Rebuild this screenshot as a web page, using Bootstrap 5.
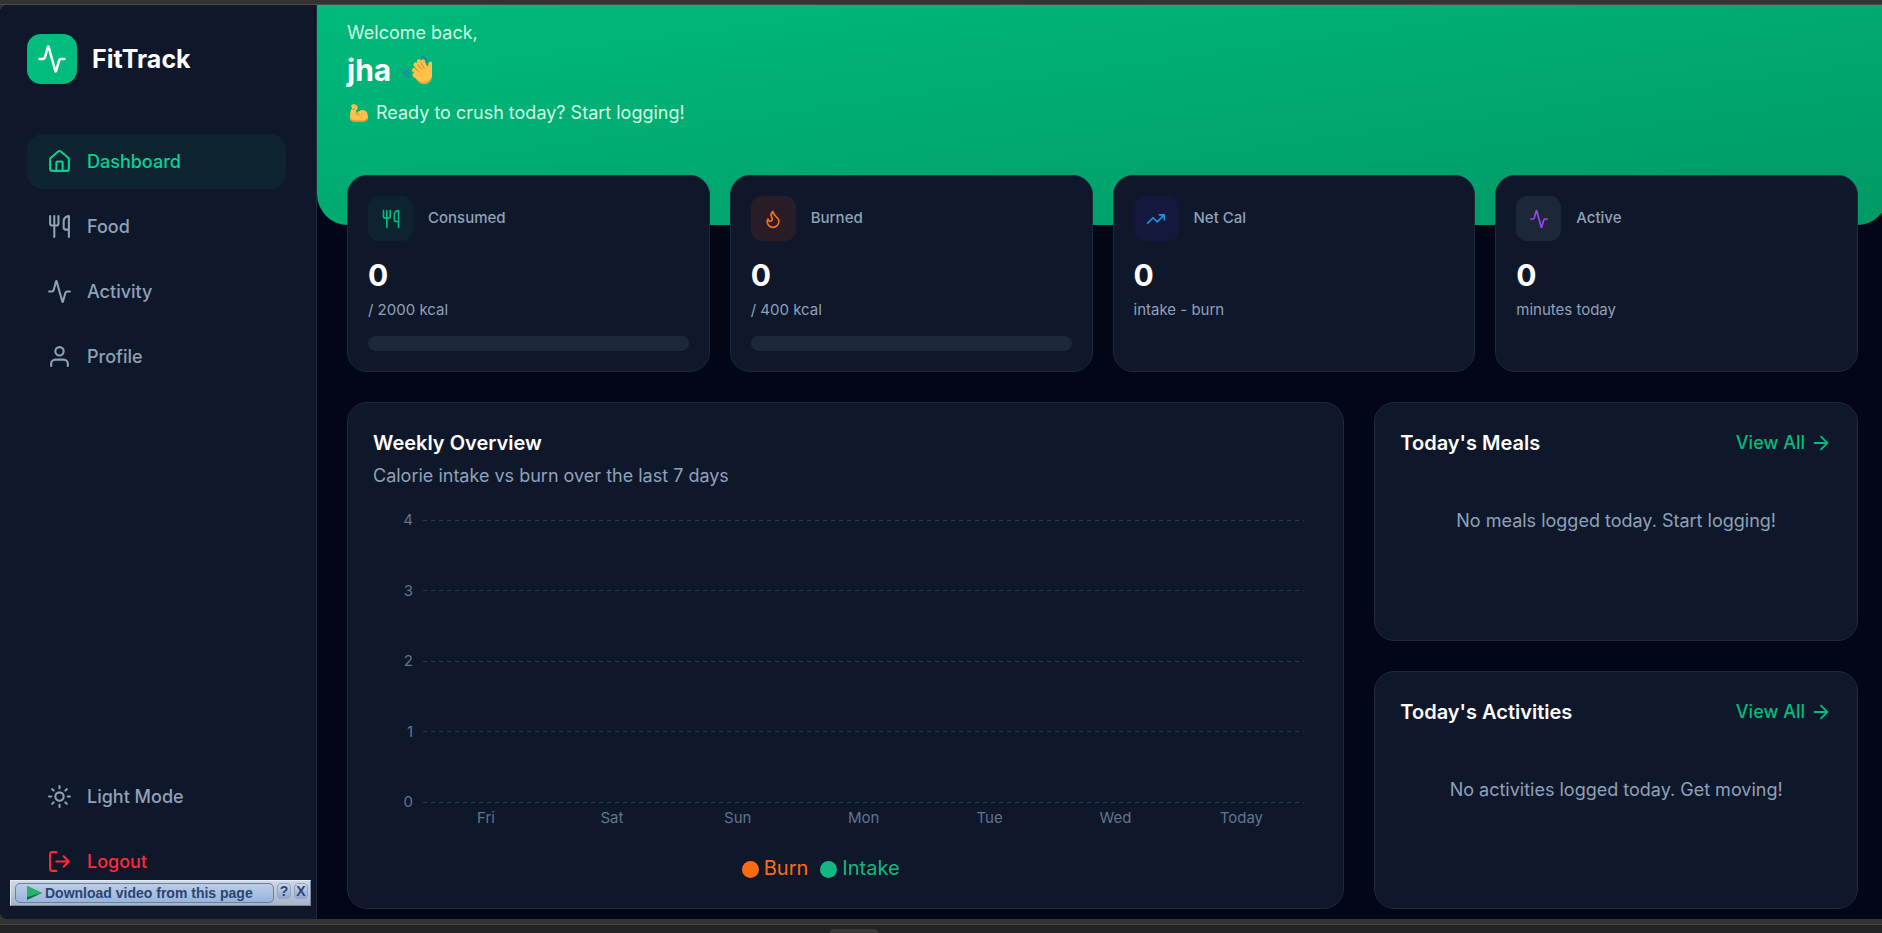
<!DOCTYPE html>
<html lang="en">
<head>
<meta charset="utf-8">
<meta name="viewport" content="width=device-width, initial-scale=1">
<title>FitTrack</title>
<link href="https://cdn.jsdelivr.net/npm/bootstrap@5.3.0/dist/css/bootstrap.min.css" rel="stylesheet">
<style>
  :root { --panel:#0f172a; --line:#1e293b; --page:#020617; --muted:#90a1b9; --dim:#62748e; --green:#00bc7d; }
  body { font-family: Inter, sans-serif; font-size:18px; line-height:28px; background:#333; color:#fff; min-height:100vh; overflow:hidden; }
  .frame-top { height:5px; background:#333; border-bottom:1px solid #4a4a4a; }
  .frame-foot { height:14px; background:#212324; border-top:5px solid #333; box-shadow:inset 0 1px #444; }
  .handle { width:48px; height:4px; background:#3a3a3a; border-radius:4px 4px 0 0; margin:5px auto 0; position:relative; right:87px; }
  .shell { background:var(--page); border-radius:8px 0 0 8px; overflow:hidden; }
  .sidebar { width:317px; background:var(--panel); border-right:1px solid var(--line); padding:29px 30px 30px 27px; }
  .gap-md { gap:15px; }
  .gap-sm { gap:10px; }
  .logo-box { width:50px; height:50px; border-radius:14px; background:var(--green); }
  .brand { font-size:25px; font-weight:700; }
  svg.ico { fill:none; stroke:currentColor; stroke-width:2; stroke-linecap:round; stroke-linejoin:round; flex:none; display:block; }
  .side-link { display:flex; align-items:center; gap:15px; width:100%; height:55px; padding:0 20px; border:0; border-radius:16px; background:none; color:var(--muted); font-weight:500; text-decoration:none; }
  .side-link.active { background:#0d232f; color:#00d492; }
  .side-link.danger { color:#fb2c36; }
  .side-nav { gap:10px; margin-top:50px; }
  .main { min-width:0; margin-right:-6px; }
  .hero { height:220px; padding:14px 30px; background:linear-gradient(to bottom right,#00ba7b,#009966); border-radius:0 0 31px 31px; color:#d0fae5; }
  .hero h1 { font-size:30px; line-height:36px; font-weight:700; color:#fff; margin:5px 0 11px; gap:12px; }
  .cheer { gap:7px; }
  .content { padding:0 30px 10px; margin-top:-50px; gap:30px; }
  .stats { display:grid; grid-template-columns:repeat(4,1fr); gap:20px; }
  .panel { background:var(--panel); border:1px solid var(--line); border-radius:20px; }
  .stat { height:197px; padding:20px; }
  .stat-ico { width:45px; height:45px; border-radius:11px; }
  .tone-food { background:#0d232f; color:#00bc7d; }
  .tone-burn { background:#281c27; color:#ff6b13; }
  .tone-net { background:#13193c; color:#2090dc; }
  .tone-active { background:#1d273a; color:#9b45f0; }
  .stat-name { font-size:15px; line-height:24px; padding-bottom:2px; font-weight:500; color:var(--muted); }
  .stat-num { font-size:30px; line-height:36px; font-weight:700; margin-top:16px; }
  .stat-sub { font-size:15px; line-height:24px; color:var(--muted); margin-top:5px; }
  .meter { height:15px; border-radius:8px; background:#1d293a; margin-top:14px; }
  .boards { display:grid; grid-template-columns:repeat(3,1fr); gap:30px; }
  .week { grid-column:span 2; padding:26px 25px; }
  .side-panels { gap:30px; }
  .side-panel { flex:1 1 0; padding:26px 25px; }
  h2 { font-size:20px; line-height:28px; font-weight:600; margin:0; }
  .soft { color:var(--muted); }
  .subtitle { margin-top:5px; }
  .empty-note { margin:50px 0 0; }
  .view-all { color:var(--green); font-weight:500; text-decoration:none; gap:5px; }
  .plot { margin:18px 14px 0 26px; }
  .tick { height:24px; line-height:24px; font-size:15px; color:var(--dim); gap:10px; }
  .tick span { width:14px; text-align:right; }
  .tick i { flex:1; height:1px; background:repeating-linear-gradient(90deg,#2b3a4e 0 4px,transparent 4px 8px); }
  .days { margin:-8px 14px 0 50px; }
  .days span { flex:1 1 0; text-align:center; font-size:15px; line-height:24px; color:var(--dim); }
  .legend-row { gap:12px; margin-top:24px; padding-right:50px; font-size:20px; }
  .legend-row span { gap:5px; }
  .legend-row i { width:17px; height:17px; border-radius:50%; background:currentColor; margin-top:2px; }
  .lg-burn { color:#ff6b13; }
  .lg-intake { color:#10b981; }
  .grabber { position:absolute; left:10px; bottom:27px; width:301px; height:26px; background:linear-gradient(#cdd9e6,#a6b4c6); border:1px solid #e3ebf2; border-bottom-color:#7787a2; border-right-color:#7787a2; padding:0 2px 0 4px; gap:3px; }
  .grabber button { border:1px solid #8fa3c2; padding:0; color:#2b4470; font-family:"Liberation Sans",sans-serif; font-weight:700; font-size:14px; line-height:16px; background:linear-gradient(#c9d6e8,#8fa9d0); white-space:nowrap; }
  .grabber .get { width:260px; height:20px; border:1px solid #6681a8; border-radius:5px; background:linear-gradient(#bccde3,#99b4de); padding-left:10px; gap:3px; }
  .grabber .sq { width:14px; height:16px; line-height:14px; border-radius:4px; margin-bottom:4px; }
</style>
</head>
<body class="d-flex flex-column">
<svg width="0" height="0" class="position-absolute" aria-hidden="true">
  <symbol id="pulse" viewBox="0 0 24 24"><path d="M22 12h-2.48a2 2 0 0 0-1.93 1.46l-2.35 8.36a.25.25 0 0 1-.48 0L9.24 2.18a.25.25 0 0 0-.48 0l-2.35 8.36A2 2 0 0 1 4.49 12H2"/></symbol>
  <symbol id="fork" viewBox="0 0 24 24"><path d="M3 2v7c0 1.100.9 2 2 2h4a2 2 0 0 0 2-2V2M7 2v20M21 15V2a5 5 0 0 0-5 5v6c0 1.100.9 2 2 2h3Zm0 0v7"/></symbol>
  <symbol id="arrow" viewBox="0 0 24 24"><path d="M5 12h14M12 5l7 7-7 7"/></symbol>
</svg>
<div class="frame-top"></div>
<div class="shell d-flex flex-grow-1 position-relative">
  <aside class="sidebar d-flex flex-column flex-shrink-0">
    <div class="d-flex align-items-center gap-md">
      <div class="logo-box d-flex align-items-center justify-content-center"><svg class="ico" width="30" height="30"><use href="#pulse"/></svg></div>
      <span class="brand">FitTrack</span>
    </div>
    <nav class="side-nav d-flex flex-column">
      <a class="side-link active" href="#"><svg class="ico" width="25" height="25" viewBox="0 0 24 24"><path d="M15 21v-8a1 1 0 0 0-1-1h-4a1 1 0 0 0-1 1v8"/><path d="M3 10a2 2 0 0 1 .71-1.53l7-6a2 2 0 0 1 2.580 0l7 6A2 2 0 0 1 21 10v9a2 2 0 0 1-2 2H5a2 2 0 0 1-2-2z"/></svg>Dashboard</a>
      <a class="side-link" href="#"><svg class="ico" width="25" height="25"><use href="#fork"/></svg>Food</a>
      <a class="side-link" href="#"><svg class="ico" width="25" height="25"><use href="#pulse"/></svg>Activity</a>
      <a class="side-link" href="#"><svg class="ico" width="25" height="25" viewBox="0 0 24 24"><path d="M20 21v-2a4 4 0 0 0-4-4H8a4 4 0 0 0-4 4v2"/><circle cx="12" cy="7" r="4"/></svg>Profile</a>
    </nav>
    <div class="mt-auto d-flex flex-column gap-sm">
      <button class="side-link" type="button"><svg class="ico" width="25" height="25" viewBox="0 0 24 24"><circle cx="12" cy="12" r="4"/><path d="M12 2v2M12 20v2M4.930 4.930l1.410 1.410M17.660 17.660l1.410 1.410M2 12h2M20 12h2M6.340 17.660l-1.410 1.410M19.070 4.930l-1.410 1.410"/></svg>Light Mode</button>
      <button class="side-link danger" type="button"><svg class="ico" width="25" height="25" viewBox="0 0 24 24"><path d="M9 21H5a2 2 0 0 1-2-2V5a2 2 0 0 1 2-2h4M16 17l5-5-5-5M21 12H9"/></svg>Logout</button>
    </div>
  </aside>

  <main class="main flex-grow-1 d-flex flex-column">
    <header class="hero">
      <div>Welcome back,</div>
      <h1 class="d-flex align-items-center">jha
        <svg width="30" height="30" viewBox="0 0 30 30" role="img" aria-label="waving hand">
          <g fill="none" stroke="#247fb0" stroke-width="1.300" stroke-linecap="round"><path d="M1 15q0 5 5 7M3.500 15q.5 3 3 4M18 1.500q5 0 6.500 5.500M19 4q2.500.5 3.300 3"/></g>
          <g stroke="#ffc148" stroke-width="4.200" stroke-linecap="round"><path d="M18 21 11 15M19 17 12.500 9.500M20 15 16 6.500M22 14 20 6.500M17 24 11.500 20"/></g>
          <path d="M14 14l8-6 3 4 .3-3q.7-3 2.700-2.500l1 1v14q-1 6.500-7 7.500-5 .5-8-4l-3-5z" fill="#ffc148"/>
          <path d="M12.500 13.500l4 3.500M14.500 9.500l4.500 5M18 7.500l3.500 6.500" stroke="#d5892f" stroke-width="1" fill="none"/><path d="M15 26q3.500 3 7.500 2 4-1 5.500-4" stroke="#e49a38" stroke-width="1.200" fill="none"/>
        </svg>
      </h1>
      <div class="cheer d-flex align-items-center">
        <svg width="22" height="20" viewBox="0 0 22 20" role="img" aria-label="flexed arm">
          <path d="M4 2.500Q6 .5 8.500 1.500q3 1 2 4.500L9 7.500l.5 3q3-4 6.500-3.500 5 1 5 7 0 4-5 4.500H7q-4-.5-4-5Q3 8 5 5.500z" fill="#ffc148"/>
          <path d="M3.300 15.500q1 2.500 4 2.600h8.500q4-.4 4.700-3" fill="none" stroke="#ea9638" stroke-width="1.600"/><path d="M5.500 6.500l2.500-1M9.500 10.500q1.500 0 2.500 2M14.500 11h.6M13.500 14h.6" stroke="#cf842d" fill="none"/>
        </svg>Ready to crush today? Start logging!</div>
    </header>

    <div class="content d-flex flex-column flex-grow-1">
      <section class="stats">
        <article class="panel stat">
          <div class="d-flex align-items-center gap-md"><div class="stat-ico tone-food d-flex align-items-center justify-content-center"><svg class="ico" width="20" height="20"><use href="#fork"/></svg></div><span class="stat-name">Consumed</span></div>
          <div class="stat-num">0</div><div class="stat-sub">/ 2000 kcal</div><div class="meter"></div>
        </article>
        <article class="panel stat">
          <div class="d-flex align-items-center gap-md"><div class="stat-ico tone-burn d-flex align-items-center justify-content-center"><svg class="ico" width="20" height="20" viewBox="0 0 24 24"><path d="M8.500 14.500A2.500 2.500 0 0 0 11 12c0-1.380-.5-2-1-3-1.072-2.143-.224-4.054 2-6 .5 2.500 2 4.900 4 6.500 2 1.600 3 3.500 3 5.500a7 7 0 1 1-14 0c0-1.153.433-2.294 1-3a2.500 2.500 0 0 0 2.500 2.500z"/></svg></div><span class="stat-name">Burned</span></div>
          <div class="stat-num">0</div><div class="stat-sub">/ 400 kcal</div><div class="meter"></div>
        </article>
        <article class="panel stat">
          <div class="d-flex align-items-center gap-md"><div class="stat-ico tone-net d-flex align-items-center justify-content-center"><svg class="ico" width="20" height="20" viewBox="0 0 24 24"><path d="M22 7l-8.500 8.500-5-5L2 17M16 7h6v6"/></svg></div><span class="stat-name">Net Cal</span></div>
          <div class="stat-num">0</div><div class="stat-sub">intake - burn</div>
        </article>
        <article class="panel stat">
          <div class="d-flex align-items-center gap-md"><div class="stat-ico tone-active d-flex align-items-center justify-content-center"><svg class="ico" width="20" height="20"><use href="#pulse"/></svg></div><span class="stat-name">Active</span></div>
          <div class="stat-num">0</div><div class="stat-sub">minutes today</div>
        </article>
      </section>

      <section class="boards flex-grow-1">
        <article class="panel week d-flex flex-column">
          <h2>Weekly Overview</h2>
          <div class="soft subtitle">Calorie intake vs burn over the last 7 days</div>
          <div class="plot flex-grow-1 d-flex flex-column justify-content-between">
            <div class="tick d-flex align-items-center"><span>4</span><i></i></div>
            <div class="tick d-flex align-items-center"><span>3</span><i></i></div>
            <div class="tick d-flex align-items-center"><span>2</span><i></i></div>
            <div class="tick d-flex align-items-center"><span>1</span><i></i></div>
            <div class="tick d-flex align-items-center"><span>0</span><i></i></div>
          </div>
          <div class="days d-flex"><span>Fri</span><span>Sat</span><span>Sun</span><span>Mon</span><span>Tue</span><span>Wed</span><span>Today</span></div>
          <div class="legend-row d-flex justify-content-center">
            <span class="lg-burn d-flex align-items-center"><i></i>Burn</span>
            <span class="lg-intake d-flex align-items-center"><i></i>Intake</span>
          </div>
        </article>
        <div class="side-panels d-flex flex-column">
          <article class="panel side-panel">
            <div class="d-flex justify-content-between align-items-center"><h2>Today's Meals</h2><a class="view-all d-flex align-items-center" href="#">View All <svg class="ico" width="22" height="22"><use href="#arrow"/></svg></a></div>
            <p class="soft text-center empty-note">No meals logged today. Start logging!</p>
          </article>
          <article class="panel side-panel">
            <div class="d-flex justify-content-between align-items-center"><h2>Today's Activities</h2><a class="view-all d-flex align-items-center" href="#">View All <svg class="ico" width="22" height="22"><use href="#arrow"/></svg></a></div>
            <p class="soft text-center empty-note">No activities logged today. Get moving!</p>
          </article>
        </div>
      </section>
    </div>
  </main>
</div>
<div class="grabber d-flex align-items-center">
  <button class="get d-flex align-items-center" type="button"><svg width="16" height="14" viewBox="0 0 16 14"><path d="M1 0v14l15-7z" fill="#0d6b48"/><path d="M1 0v11l15-4z" fill="#24b56d"/></svg>Download video from this page</button>
  <button class="sq" type="button" aria-label="Help">?</button>
  <button class="sq" type="button" aria-label="Close">X</button>
</div>
<div class="frame-foot"><div class="handle"></div></div>
<script src="https://cdn.jsdelivr.net/npm/bootstrap@5.3.0/dist/js/bootstrap.bundle.min.js"></script>
</body>
</html>
